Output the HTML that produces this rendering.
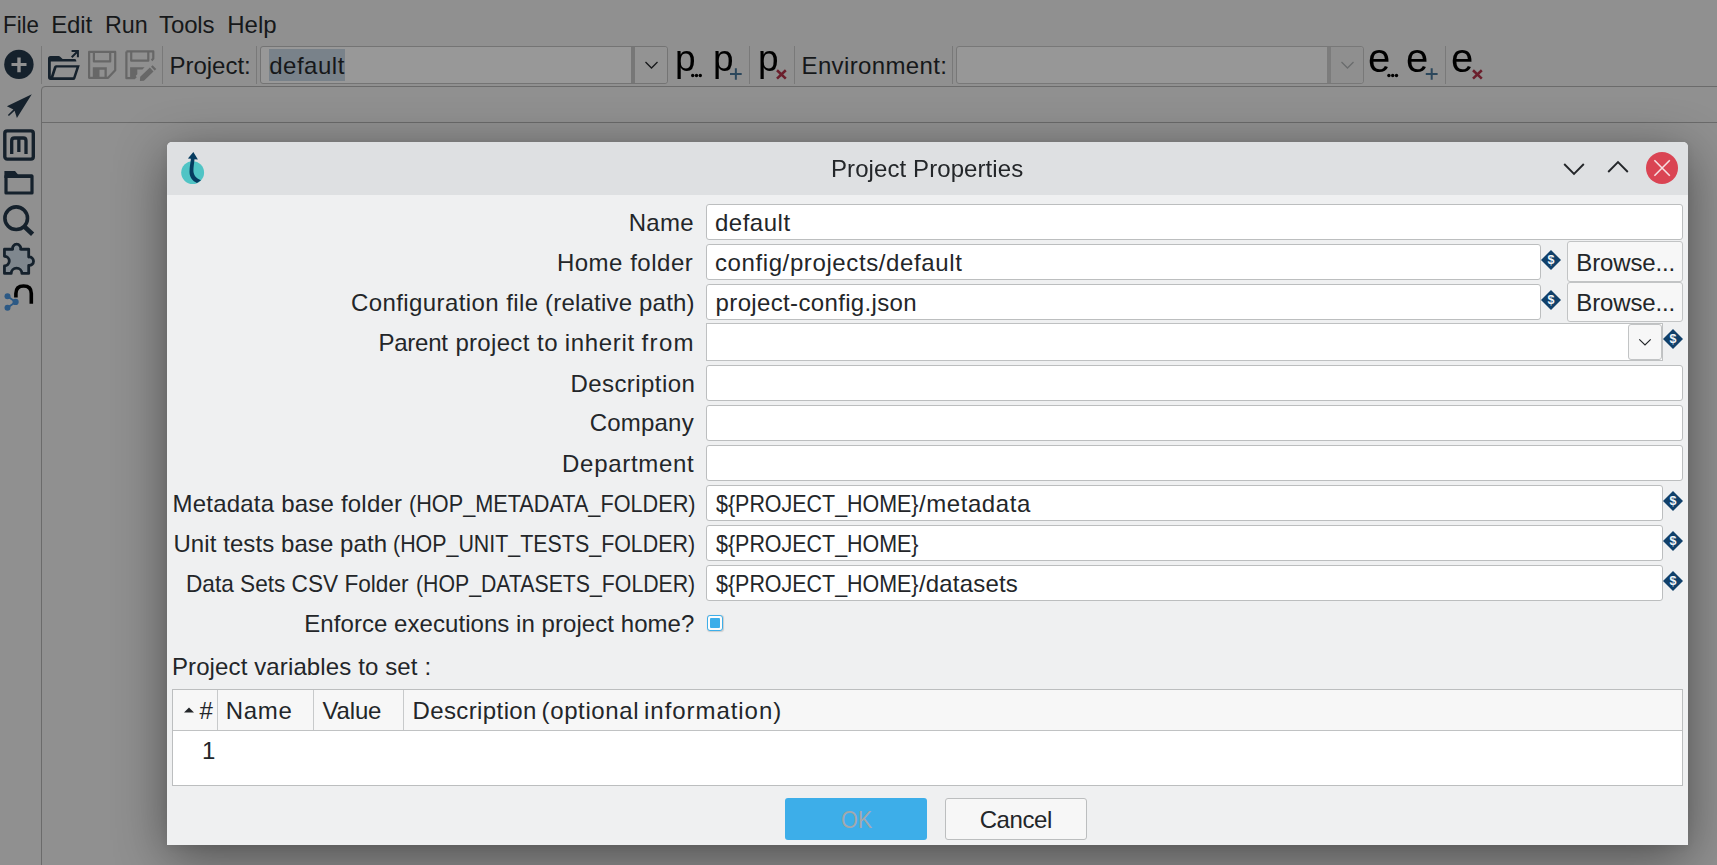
<!DOCTYPE html>
<html lang="en"><head><meta charset="utf-8"><title>Project Properties</title>
<style>
html,body{margin:0;padding:0;}
body{width:1717px;height:865px;overflow:hidden;background:#909090;position:relative;font-family:"Liberation Sans",sans-serif;}
.t{position:absolute;white-space:pre;font-family:"Liberation Sans",sans-serif;}
.abs{position:absolute;box-sizing:border-box;}
.vsep{position:absolute;width:1px;background:#797979;top:46px;height:38px;}
.dlg{position:absolute;left:167px;top:142px;width:1521px;height:703px;background:#eff0f1;border-radius:5px 5px 0 0;box-shadow:0 12px 52px 0 rgba(0,0,0,0.46),0 2px 8px rgba(0,0,0,0.05);}
.titlebar{position:absolute;left:0;top:0;width:100%;height:53px;background:#dee0e2;border-radius:5px 5px 0 0;}
.field{position:absolute;box-sizing:border-box;background:#fff;border:1px solid #bcbebf;border-radius:3px;height:36px;}
.btn{position:absolute;box-sizing:border-box;background:#f7f7f7;border:1px solid #c2c4c5;border-radius:3px;}
svg{position:absolute;overflow:visible;}

</style></head>
<body>
<!-- main window (dimmed) -->
<div class="abs" style="left:41px;top:86px;width:1680px;height:790px;border:1px solid #6b6b6b;border-radius:4px 0 0 0;"></div>
<div class="abs" style="left:42px;top:122px;width:1675px;height:1px;background:#6b6b6b;"></div>
<div class="vsep" style="left:41px"></div>
<div class="vsep" style="left:162px"></div>
<div class="vsep" style="left:256px"></div>
<div class="vsep" style="left:749px"></div>
<div class="vsep" style="left:794px"></div>
<div class="vsep" style="left:952px"></div>
<div class="vsep" style="left:1445px"></div>
<!-- project combo -->
<div class="abs" style="left:260px;top:46px;width:408px;height:38px;border:1px solid #747474;border-radius:3px;background:#989898;"></div>
<div class="abs" style="left:631px;top:47px;width:4px;height:36px;background:#777777;"></div>
<div class="abs" style="left:635px;top:47px;width:32px;height:36px;background:#939393;border-radius:0 3px 3px 0;"></div>
<div class="abs" style="left:269px;top:49px;width:76px;height:32px;background:#79828a;"></div>
<svg style="left:645px;top:61px" width="13" height="8" viewBox="0 0 13 8"><path d="M0.5 1 L6.5 7 L12.5 1" fill="none" stroke="#16181a" stroke-width="1.3"/></svg>
<!-- env combo -->
<div class="abs" style="left:956px;top:46px;width:408px;height:38px;border:1px solid #787878;border-radius:3px;background:#979797;"></div>
<div class="abs" style="left:1327px;top:47px;width:4px;height:36px;background:#7c7c7c;"></div>
<div class="abs" style="left:1331px;top:47px;width:32px;height:36px;background:#8f8f8f;border-radius:0 3px 3px 0;"></div>
<svg style="left:1341px;top:61px" width="13" height="8" viewBox="0 0 13 8"><path d="M0.5 1 L6.5 7 L12.5 1" fill="none" stroke="#6a6c6d" stroke-width="1.3"/></svg>

<svg class="abs" style="left:0;top:0" width="1717" height="865" viewBox="0 0 1717 865">
<g fill="#15212c" stroke="none">
<!-- plus circle -->
<circle cx="18.9" cy="64.4" r="14.7"/>
<path d="M11.5 63 H26.5 V66 H11.5 Z M17.3 57.4 H20.7 V72.2 H17.3 Z" fill="#919191"/>
<!-- open folder -->
<path d="M50.6 56 H58.6 Q59.5 56 60.2 56.7 L62.6 59 H74.6 Q76.4 59 76.4 61.4 H50.8 V76.5 L54.0 66.8 Q54.5 65.3 56 65.3 H79.8 L75.4 78.4 Q74.9 79.9 73.2 79.9 H50.6 Q48 79.9 48 77.3 V58.6 Q48 56 50.6 56 Z M56.6 67.6 L53.4 77.2 H73.2 L76.4 67.6 Z" fill-rule="evenodd"/>
<path d="M71.6 50 H78.9 V57.2 H76.9 V53.5 L72.4 58 L71 56.6 L75.5 52 H71.6 Z"/>
<!-- arrow (perspective icon) -->
<path d="M31.8 94.2 L6.9 106.3 L13.4 109.6 L7.9 115 L8.9 116 L14.6 110.8 L16.9 118 Z"/>
</g>
<!-- save (disabled) -->
<g fill="none" stroke="#676767" stroke-width="2.2" stroke-linejoin="round">
<path d="M89.1 51.9 H115.2 V70.3 L108.1 77.8 H89.1 Z"/>
<path d="M93.9 52 V61.4 H110.2 V52"/>
<path d="M126.4 51.4 H153.3 V58.5 L151.6 60.4"/>
<path d="M126.4 51.4 V78.2 H134.2 L136 76.4"/>
<path d="M131.2 51.5 V60.7 H148.3 V51.5"/>
</g>
<g fill="#676767">
<path d="M92.8 67.3 H106.8 V78 H104.5 V69.8 H99.5 V78 H92.8 Z"/>
<path d="M130.1 67.3 H144.6 L142.4 69.6 H137.3 V74.2 L133.6 78 H130.1 Z"/>
<path d="M139.9 81 L140.2 76.8 L149.9 67.6 L153.5 71.4 L143.9 80.8 Z M151 66.7 L152.6 65.2 L156.3 69 L154.6 70.5 Z"/>
</g>
<!-- M icon -->
<g fill="none" stroke="#15212c" stroke-width="3.4">
<rect x="4.8" y="130.9" width="28.5" height="28.2" rx="2.4"/>
<path d="M11.7 154 V140.8 Q11.7 138 14.5 138 H23.2 Q26 138 26 140.8 V154 M18.85 138 V152" stroke-width="3.3"/>
<!-- folder -->
<path d="M6 176 H32 V193 H6 Z" stroke-width="3.2" stroke-linejoin="round"/>
<!-- search -->
<circle cx="16.2" cy="218.2" r="11.3" stroke-width="3.6"/>
<path d="M24.4 226.6 L32.6 234.3" stroke-width="4.7"/>
<!-- n arch -->
<path d="M15.9 297.5 V293.5 Q15.9 286 23.6 286 Q31.3 286 31.3 293.5 V303.8" stroke="#000" stroke-width="3.6"/>
</g>
<path d="M4.4 171 H15 L18 174.5 H32.5 V178 H4.4 Z" fill="#15212c"/>
<!-- puzzle -->
<path d="M4.45 249.25 H12.66 A4.1 4.1 0 1 1 20.64 249.25 H28.7 V256.99 A4.25 4.25 0 1 1 28.7 265.41 V273.45 H21.9 A5.35 5.35 0 0 0 11.2 273.45 H4.45 V265.95 A4.85 4.85 0 0 0 4.45 256.25 Z" fill="#7f878e" stroke="#15212c" stroke-width="2.8" stroke-linejoin="round"/>
<!-- share nodes -->
<g fill="#2c5985" stroke="#2c5985">
<path d="M7.5 296.3 L15.6 301.9 L7.5 307.8" fill="none" stroke-width="1.8"/>
<circle cx="7.5" cy="296.3" r="3" stroke="none"/><circle cx="15.6" cy="301.9" r="3.1" stroke="none"/><circle cx="7.5" cy="307.8" r="3" stroke="none"/>
</g>
<!-- p... p+ px / e... e+ ex adornments -->
<g fill="#000">
<circle cx="692.7" cy="75.5" r="1.7"/><circle cx="696.5" cy="75.5" r="1.7"/><circle cx="700.3" cy="75.5" r="1.7"/>
<circle cx="1388.9" cy="75.5" r="1.7"/><circle cx="1392.7" cy="75.5" r="1.7"/><circle cx="1396.5" cy="75.5" r="1.7"/>
</g>
<g fill="none" stroke="#2b475c" stroke-width="2">
<path d="M730 74 H741.7 M735.85 68.2 V79.8"/>
<path d="M1425.8 74 H1437.6 M1431.7 68.2 V79.8"/>
</g>
<g fill="none" stroke="#6b1f2c" stroke-width="2.6">
<path d="M777 70.3 L785.8 78.6 M785.8 70.3 L777 78.6"/>
<path d="M1473 70.3 L1481.8 78.6 M1481.8 70.3 L1473 78.6"/>
</g>
</svg>

<!-- dialog -->
<div class="dlg">
  <div class="titlebar"></div>
</div>

<div class="field" style="left:706px;top:204px;width:977px;"></div>
<div class="field" style="left:706px;top:244px;width:835px;"></div>
<div class="btn" style="left:1567px;top:241px;width:116px;height:41px;"></div>
<svg class="dia" style="left:1541px;top:250px" width="20" height="20" viewBox="0 0 20 20"><path d="M10 0 L20 10 L10 20 L0 10 Z" fill="#10406a"/><text x="10" y="14.4" text-anchor="middle" font-family="'Liberation Sans', sans-serif" font-size="12.5" font-weight="bold" fill="#f2f6f9">$</text></svg>
<div class="field" style="left:706px;top:284px;width:835px;"></div>
<div class="btn" style="left:1567px;top:282px;width:116px;height:40px;"></div>
<svg class="dia" style="left:1541px;top:290px" width="20" height="20" viewBox="0 0 20 20"><path d="M10 0 L20 10 L10 20 L0 10 Z" fill="#10406a"/><text x="10" y="14.4" text-anchor="middle" font-family="'Liberation Sans', sans-serif" font-size="12.5" font-weight="bold" fill="#f2f6f9">$</text></svg>
<div class="field" style="left:706px;top:323px;width:957px;height:38px;border-radius:0;border-color:#bfc1c2"></div>
<div class="btn" style="left:1628px;top:324px;width:34px;height:36px;"></div>
<svg style="left:1639px;top:339px" width="12" height="7" viewBox="0 0 12 7"><path d="M0.3 0.3 L6 6 L11.7 0.3" fill="none" stroke="#232629" stroke-width="1.2"/></svg>
<svg class="dia" style="left:1663px;top:329px" width="20" height="20" viewBox="0 0 20 20"><path d="M10 0 L20 10 L10 20 L0 10 Z" fill="#10406a"/><text x="10" y="14.4" text-anchor="middle" font-family="'Liberation Sans', sans-serif" font-size="12.5" font-weight="bold" fill="#f2f6f9">$</text></svg>
<div class="field" style="left:706px;top:365px;width:977px;"></div>
<div class="field" style="left:706px;top:405px;width:977px;"></div>
<div class="field" style="left:706px;top:445px;width:977px;"></div>
<div class="field" style="left:706px;top:485px;width:957px;"></div>
<svg class="dia" style="left:1663px;top:491px" width="20" height="20" viewBox="0 0 20 20"><path d="M10 0 L20 10 L10 20 L0 10 Z" fill="#10406a"/><text x="10" y="14.4" text-anchor="middle" font-family="'Liberation Sans', sans-serif" font-size="12.5" font-weight="bold" fill="#f2f6f9">$</text></svg>
<div class="field" style="left:706px;top:525px;width:957px;"></div>
<svg class="dia" style="left:1663px;top:531px" width="20" height="20" viewBox="0 0 20 20"><path d="M10 0 L20 10 L10 20 L0 10 Z" fill="#10406a"/><text x="10" y="14.4" text-anchor="middle" font-family="'Liberation Sans', sans-serif" font-size="12.5" font-weight="bold" fill="#f2f6f9">$</text></svg>
<div class="field" style="left:706px;top:565px;width:957px;"></div>
<svg class="dia" style="left:1663px;top:571px" width="20" height="20" viewBox="0 0 20 20"><path d="M10 0 L20 10 L10 20 L0 10 Z" fill="#10406a"/><text x="10" y="14.4" text-anchor="middle" font-family="'Liberation Sans', sans-serif" font-size="12.5" font-weight="bold" fill="#f2f6f9">$</text></svg>
<div class="abs" style="left:707px;top:615px;width:16px;height:16px;border:1px solid #3daee9;border-radius:3px;background:#fcfcfc;box-shadow:0.5px 0.5px 1px rgba(0,0,0,0.15)"><div style="position:absolute;left:2px;top:2px;width:10px;height:10px;background:#3daee9;border-radius:1px"></div></div>
<div class="abs" style="left:172px;top:689px;width:1511px;height:97px;border:1px solid #bcbebf;background:#fff;"></div>
<div class="abs" style="left:173px;top:690px;width:1509px;height:41px;background:#f7f7f7;border-bottom:1px solid #c0c2c3;"></div>
<div class="abs" style="left:217px;top:690px;width:1px;height:40px;background:#c8cacb;"></div>
<div class="abs" style="left:313px;top:690px;width:1px;height:40px;background:#c8cacb;"></div>
<div class="abs" style="left:403px;top:690px;width:1px;height:40px;background:#c8cacb;"></div>
<svg style="left:184px;top:707px" width="10" height="6" viewBox="0 0 10 6"><path d="M0 5.5 L5 0.5 L10 5.5 Z" fill="#232629"/></svg>
<div class="abs" style="left:785px;top:798px;width:142px;height:42px;background:#3daee9;border-radius:3px;"></div>
<div class="btn" style="left:945px;top:798px;width:142px;height:42px;background:#f7f7f7;border-color:#bcbebf"></div>
<svg style="left:1563px;top:162px" width="22" height="14" viewBox="0 0 22 14"><path d="M1.2 2 L11 11.8 L20.8 2" fill="none" stroke="#232629" stroke-width="1.9"/></svg>
<svg style="left:1607px;top:160px" width="22" height="14" viewBox="0 0 22 14"><path d="M1.2 12 L11 2.2 L20.8 12" fill="none" stroke="#232629" stroke-width="1.9"/></svg>
<svg style="left:1646px;top:152px" width="32" height="32" viewBox="0 0 32 32"><circle cx="16" cy="16" r="16" fill="#da4453"/><path d="M8.4 8.3 L23.8 23.7 M23.8 8.3 L8.4 23.7" fill="none" stroke="#f6dfe2" stroke-width="1.6"/></svg>
<svg style="left:178px;top:150px" width="30" height="36" viewBox="178 150 30 36"><circle cx="192.65" cy="172.6" r="11.45" fill="#50c4c5"/><path d="M193.35 152 L197.9 159.6 L194.5 159.3 C194.2 163 193.4 167 193.4 171 C193.6 175.5 196.5 178.6 201 180.3 L196.9 182.9 C192.5 181 189.6 177.5 189.5 172 C189.5 167 190.5 163 190.9 158.8 L187.9 158.5 Z" fill="#063c60"/></svg>

<div id="texts">
<span class="t" style="left:2.57px;top:12.68px;font-size:24px;line-height:24px;letter-spacing:0.000px;color:#16181a;transform:scaleX(0.9297);transform-origin:0 0;">File</span>
<span class="t" style="left:51.30px;top:12.68px;font-size:24px;line-height:24px;letter-spacing:-0.196px;color:#16181a;">Edit</span>
<span class="t" style="left:104.83px;top:12.68px;font-size:24px;line-height:24px;letter-spacing:0.000px;color:#16181a;transform:scaleX(0.9693);transform-origin:0 0;">Run</span>
<span class="t" style="left:159.10px;top:12.68px;font-size:24px;line-height:24px;letter-spacing:-0.157px;color:#16181a;">Tools</span>
<span class="t" style="left:227.30px;top:12.68px;font-size:24px;line-height:24px;letter-spacing:-0.004px;color:#16181a;">Help</span>
<span class="t" style="left:169.40px;top:53.58px;font-size:24px;line-height:24px;letter-spacing:0.001px;color:#16181a;">Project:</span>
<span class="t" style="left:269.20px;top:53.58px;font-size:24px;line-height:24px;letter-spacing:0.518px;color:#16181a;">default</span>
<span class="t" style="left:801.50px;top:53.58px;font-size:24px;line-height:24px;letter-spacing:0.370px;color:#16181a;">Environment:</span>
<span class="t" style="left:674.60px;top:39.57px;font-size:37px;line-height:37px;letter-spacing:0.000px;color:#000;will-change:transform;">p</span>
<span class="t" style="left:713.00px;top:39.57px;font-size:37px;line-height:37px;letter-spacing:0.000px;color:#000;will-change:transform;">p</span>
<span class="t" style="left:757.70px;top:39.57px;font-size:37px;line-height:37px;letter-spacing:0.000px;color:#000;will-change:transform;">p</span>
<span class="t" style="left:1367.90px;top:37.93px;font-size:40px;line-height:40px;letter-spacing:0.000px;color:#000;will-change:transform;">e</span>
<span class="t" style="left:1406.00px;top:37.93px;font-size:40px;line-height:40px;letter-spacing:0.000px;color:#000;will-change:transform;">e</span>
<span class="t" style="left:1450.80px;top:37.93px;font-size:40px;line-height:40px;letter-spacing:0.000px;color:#000;will-change:transform;">e</span>
<span class="t" style="left:831.00px;top:156.68px;font-size:24px;line-height:24px;letter-spacing:0.086px;color:#232629;will-change:transform;">Project Properties</span>
<span class="t" style="left:628.70px;top:210.68px;font-size:24px;line-height:24px;letter-spacing:0.309px;color:#232629;">Name</span>
<span class="t" style="left:556.90px;top:250.68px;font-size:24px;line-height:24px;letter-spacing:0.517px;color:#232629;">Home folder</span>
<span class="t" style="left:350.90px;top:290.68px;font-size:24px;line-height:24px;letter-spacing:0.420px;color:#232629;">Configuration file </span>
<span class="t" style="left:545.00px;top:290.68px;font-size:24px;line-height:24px;letter-spacing:0.204px;color:#232629;">(relative path)</span>
<span class="t" style="left:378.40px;top:330.68px;font-size:24px;line-height:24px;letter-spacing:-0.229px;color:#232629;">Parent </span>
<span class="t" style="left:455.40px;top:330.68px;font-size:24px;line-height:24px;letter-spacing:0.322px;color:#232629;">project </span>
<span class="t" style="left:536.90px;top:330.68px;font-size:24px;line-height:24px;letter-spacing:0.632px;color:#232629;">to </span>
<span class="t" style="left:564.70px;top:330.68px;font-size:24px;line-height:24px;letter-spacing:0.700px;color:#232629;">inherit </span>
<span class="t" style="left:641.50px;top:330.68px;font-size:24px;line-height:24px;letter-spacing:1.364px;color:#232629;">from</span>
<span class="t" style="left:570.50px;top:371.68px;font-size:24px;line-height:24px;letter-spacing:0.420px;color:#232629;">Description</span>
<span class="t" style="left:589.70px;top:410.68px;font-size:24px;line-height:24px;letter-spacing:0.214px;color:#232629;">Company</span>
<span class="t" style="left:562.10px;top:451.68px;font-size:24px;line-height:24px;letter-spacing:0.686px;color:#232629;">Department</span>
<span class="t" style="left:172.50px;top:491.68px;font-size:24px;line-height:24px;letter-spacing:0.211px;color:#232629;">Metadata base folder </span>
<span class="t" style="left:408.60px;top:491.68px;font-size:24px;line-height:24px;letter-spacing:0.000px;color:#232629;transform:scaleX(0.9027);transform-origin:0 0;">(HOP_METADATA_FOLDER)</span>
<span class="t" style="left:173.40px;top:531.68px;font-size:24px;line-height:24px;letter-spacing:0.080px;color:#232629;">Unit tests base path </span>
<span class="t" style="left:393.01px;top:531.68px;font-size:24px;line-height:24px;letter-spacing:0.000px;color:#232629;transform:scaleX(0.8918);transform-origin:0 0;">(HOP_UNIT_TESTS_FOLDER)</span>
<span class="t" style="left:186.36px;top:571.68px;font-size:24px;line-height:24px;letter-spacing:0.000px;color:#232629;transform:scaleX(0.9426);transform-origin:0 0;">Data Sets CSV Folder </span>
<span class="t" style="left:415.91px;top:571.68px;font-size:24px;line-height:24px;letter-spacing:0.000px;color:#232629;transform:scaleX(0.8858);transform-origin:0 0;">(HOP_DATASETS_FOLDER)</span>
<span class="t" style="left:304.30px;top:611.68px;font-size:24px;line-height:24px;letter-spacing:0.054px;color:#232629;">Enforce executions in project home?</span>
<span class="t" style="left:714.90px;top:210.68px;font-size:24px;line-height:24px;letter-spacing:0.535px;color:#232629;">default</span>
<span class="t" style="left:714.90px;top:250.68px;font-size:24px;line-height:24px;letter-spacing:0.613px;color:#232629;">config/projects/default</span>
<span class="t" style="left:715.60px;top:290.68px;font-size:24px;line-height:24px;letter-spacing:0.349px;color:#232629;">project-config.json</span>
<span class="t" style="left:715.80px;top:491.68px;font-size:24px;line-height:24px;letter-spacing:0.000px;color:#232629;transform:scaleX(0.8932);transform-origin:0 0;">${PROJECT_HOME}</span>
<span class="t" style="left:918.90px;top:491.68px;font-size:24px;line-height:24px;letter-spacing:0.589px;color:#232629;">/metadata</span>
<span class="t" style="left:715.80px;top:531.68px;font-size:24px;line-height:24px;letter-spacing:0.000px;color:#232629;transform:scaleX(0.8932);transform-origin:0 0;">${PROJECT_HOME}</span>
<span class="t" style="left:715.80px;top:571.68px;font-size:24px;line-height:24px;letter-spacing:0.000px;color:#232629;transform:scaleX(0.8932);transform-origin:0 0;">${PROJECT_HOME}</span>
<span class="t" style="left:918.90px;top:571.68px;font-size:24px;line-height:24px;letter-spacing:0.188px;color:#232629;">/datasets</span>
<span class="t" style="left:1576.30px;top:250.68px;font-size:24px;line-height:24px;letter-spacing:-0.145px;color:#232629;">Browse...</span>
<span class="t" style="left:1576.30px;top:290.68px;font-size:24px;line-height:24px;letter-spacing:-0.145px;color:#232629;">Browse...</span>
<span class="t" style="left:171.90px;top:655.48px;font-size:24px;line-height:24px;letter-spacing:0.122px;color:#232629;">Project variables to set :</span>
<span class="t" style="left:199.60px;top:698.58px;font-size:24px;line-height:24px;letter-spacing:0.000px;color:#232629;">#</span>
<span class="t" style="left:225.80px;top:698.58px;font-size:24px;line-height:24px;letter-spacing:0.676px;color:#232629;">Name</span>
<span class="t" style="left:322.50px;top:698.58px;font-size:24px;line-height:24px;letter-spacing:-0.163px;color:#232629;">Value</span>
<span class="t" style="left:412.50px;top:698.58px;font-size:24px;line-height:24px;letter-spacing:0.390px;color:#232629;">Description </span>
<span class="t" style="left:541.60px;top:698.58px;font-size:24px;line-height:24px;letter-spacing:0.609px;color:#232629;">(optional </span>
<span class="t" style="left:644.10px;top:698.58px;font-size:24px;line-height:24px;letter-spacing:0.943px;color:#232629;">information)</span>
<span class="t" style="left:202.00px;top:738.68px;font-size:24px;line-height:24px;letter-spacing:0.000px;color:#232629;">1</span>
<span class="t" style="left:840.70px;top:808.08px;font-size:24px;line-height:24px;letter-spacing:0.000px;color:#a3a8ac;transform:scaleX(0.9029);transform-origin:0 0;">OK</span>
<span class="t" style="left:979.70px;top:808.08px;font-size:24px;line-height:24px;letter-spacing:-0.415px;color:#232629;">Cancel</span>
</div>
</body></html>
